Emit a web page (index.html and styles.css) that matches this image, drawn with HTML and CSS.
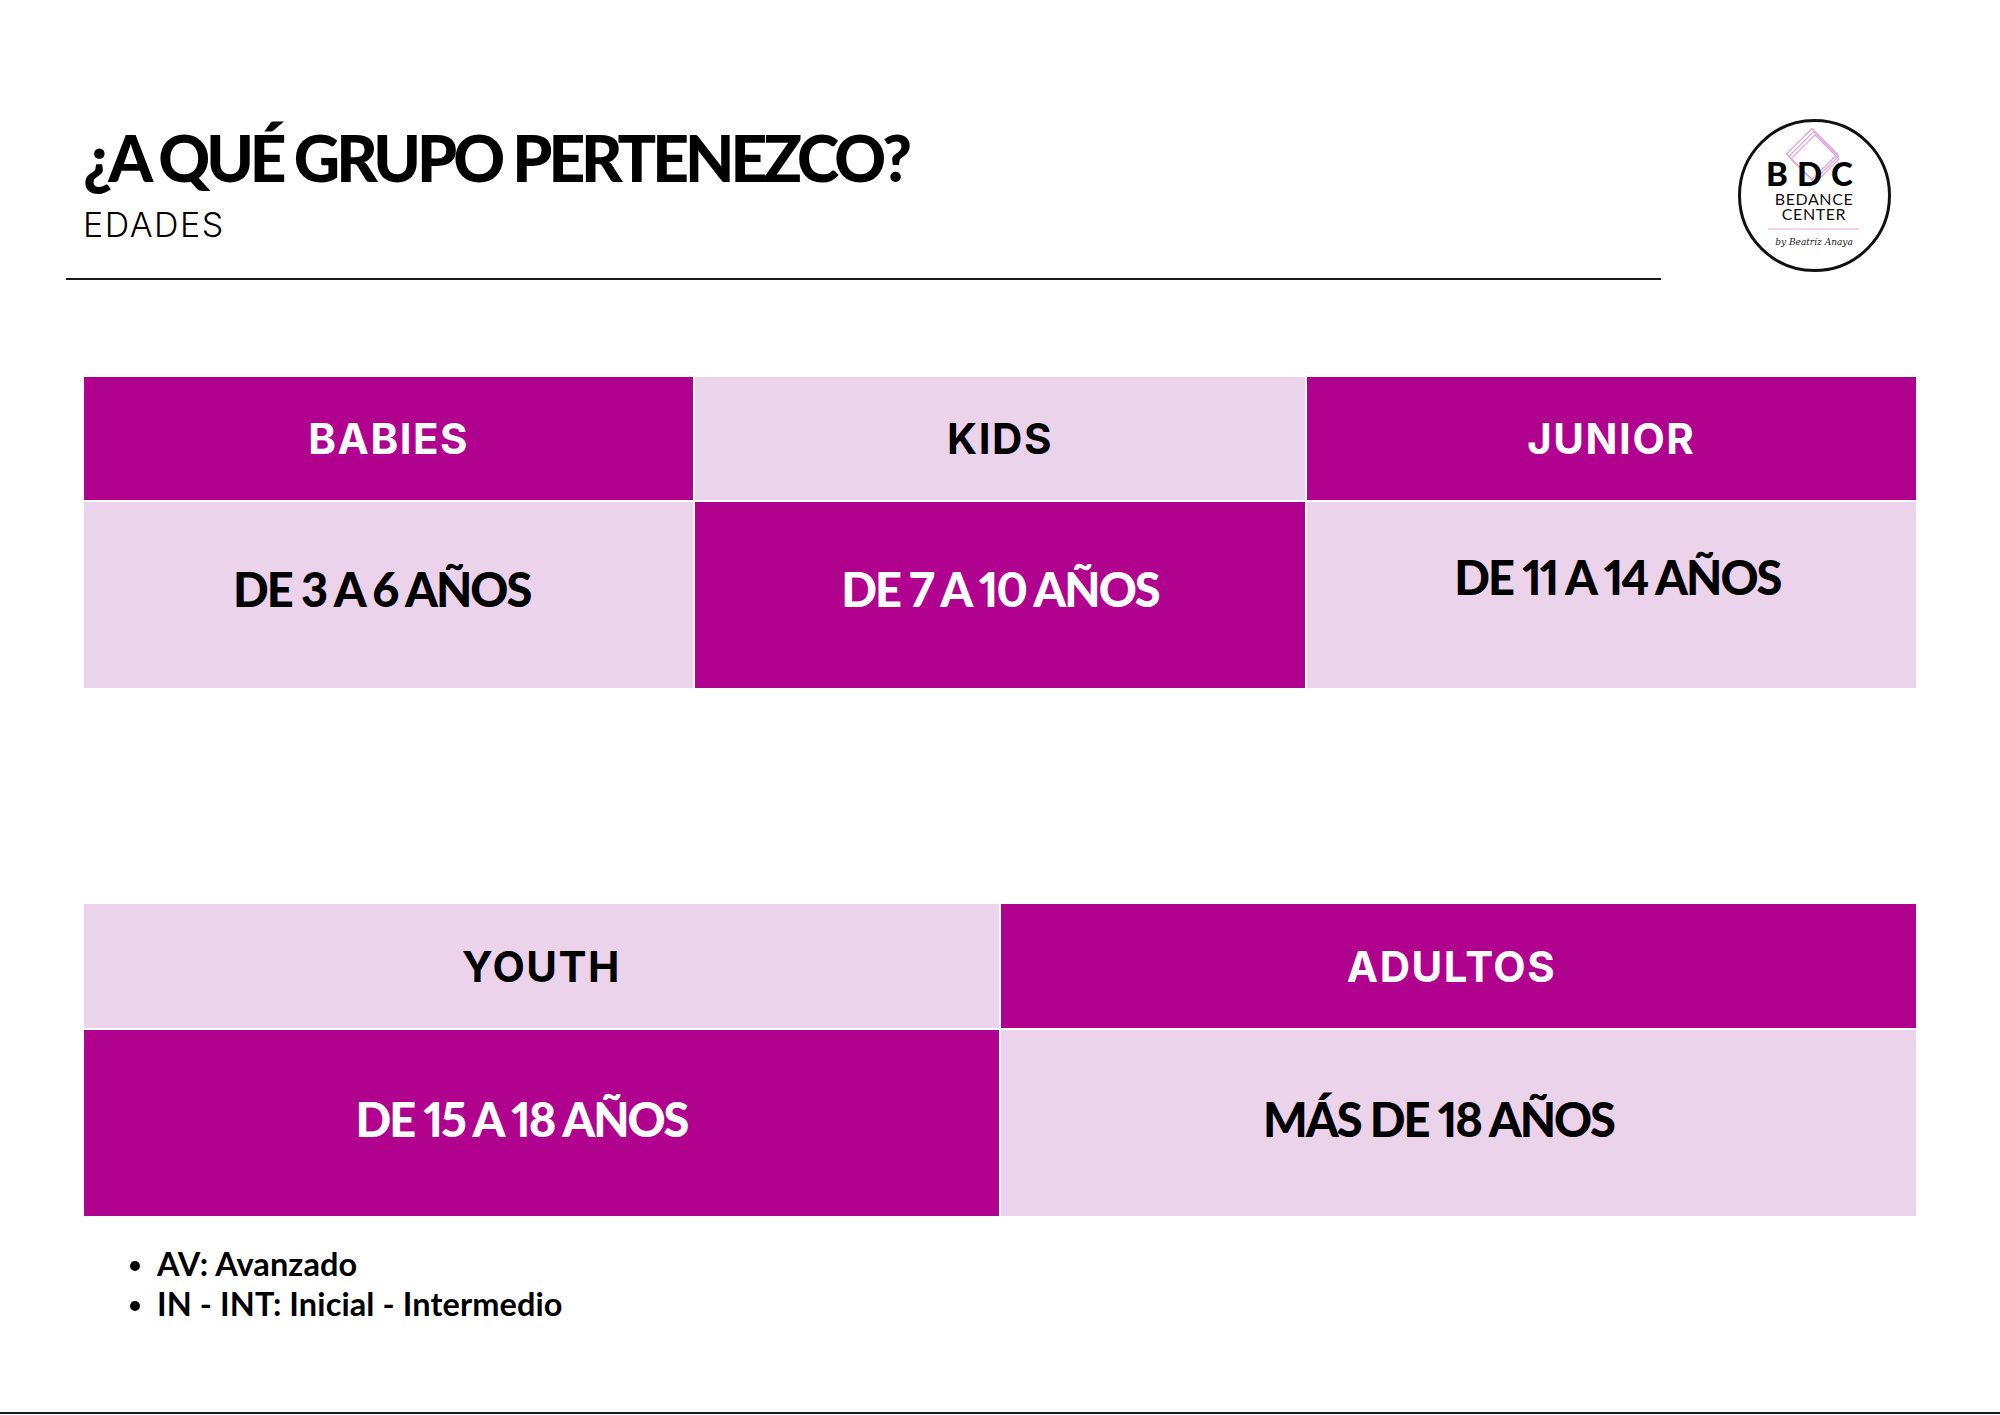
FILE: index.html
```html
<!DOCTYPE html>
<html lang="es">
<head>
<meta charset="utf-8">
<title>¿A qué grupo pertenezco?</title>
<link rel="stylesheet" href="styles.css">
</head>
<body>
<div class="page">
  <header class="top">
    <div class="heading">
      <h1 class="title">¿A QUÉ GRUPO PERTENEZCO?</h1>
      <p class="sub">EDADES</p>
    </div>
    <svg class="logo" width="155" height="155" viewBox="0 0 155 155" aria-label="BDC Bedance Center">
      <circle cx="77.5" cy="77.5" r="75" fill="#fff" stroke="#111" stroke-width="3"/>
      <g fill="none" stroke="#e3a3dc" stroke-width="1.2">
        <rect x="57" y="18" width="36" height="36" transform="rotate(45 75 36)"/>
        <rect x="59" y="21" width="35" height="35" transform="rotate(45 76.5 38.5)"/>
        <rect x="61" y="24" width="34" height="34" transform="rotate(45 78 41)"/>
      </g>
      <text x="77" y="68" class="logo-bdc" text-anchor="middle">BDC</text>
      <text x="77" y="87" class="logo-sm" text-anchor="middle">BEDANCE</text>
      <text x="77" y="102" class="logo-sm" text-anchor="middle">CENTER</text>
      <line x1="31" y1="111" x2="122" y2="111" stroke="#e3a3dc" stroke-width="1.2"/>
      <text x="77" y="127" class="logo-script" text-anchor="middle">by Beatriz Anaya</text>
    </svg>
  </header>

  <section class="grid grid-3">
    <div class="cell head dark">BABIES</div>
    <div class="cell head light">KIDS</div>
    <div class="cell head dark">JUNIOR</div>
    <div class="cell body light shift-l">DE 3 A 6 AÑOS</div>
    <div class="cell body dark">DE 7 A 10 AÑOS</div>
    <div class="cell body light raise shift-r">DE 11 A 14 AÑOS</div>
  </section>

  <section class="grid grid-2">
    <div class="cell head light">YOUTH</div>
    <div class="cell head dark shift-l">ADULTOS</div>
    <div class="cell body dark shift-ll">DE 15 A 18 AÑOS</div>
    <div class="cell body light shift-ll">MÁS DE 18 AÑOS</div>
  </section>

  <ul class="notes">
    <li>AV: Avanzado</li>
    <li>IN - INT: Inicial - Intermedio</li>
  </ul>

  <div class="bottom-line"></div>
</div>
</body>
</html>
```

FILE: styles.css
```css
* { box-sizing: border-box; }

html, body {
  margin: 0;
  padding: 0;
  background: #fff;
}

.page {
  width: 2000px;
  height: 1415px;
  display: flex;
  flex-direction: column;
  font-family: "Lato", "Liberation Sans", sans-serif;
  color: #000;
}

.top {
  display: flex;
  justify-content: space-between;
  align-items: flex-start;
  padding: 0 108px 0 66px;
}

.heading {
  width: 1595px;
  padding: 125px 0 37px 17px;
  border-bottom: 2px solid #1a1a1a;
}

.title {
  margin: 0;
  font-family: "Lato", sans-serif;
  font-weight: 900;
  font-size: 64px;
  line-height: 66px;
  letter-spacing: -4px;
}

.sub {
  margin: 18px 0 0;
  font-family: "Inter", sans-serif;
  font-weight: 300;
  font-size: 34px;
  line-height: 32px;
  letter-spacing: 1.5px;
}

.logo {
  margin-top: 118px;
  display: block;
}

.logo-bdc {
  font-family: "Lato", sans-serif;
  font-weight: 900;
  font-size: 33px;
  letter-spacing: 9px;
  fill: #000;
}

.logo-sm {
  font-family: "Lato", sans-serif;
  font-weight: 400;
  font-size: 16px;
  letter-spacing: 0.6px;
  fill: #111;
}

.logo-script {
  font-family: "DejaVu Serif", serif;
  font-style: italic;
  font-size: 9px;
  fill: #222;
}

.grid {
  display: grid;
  gap: 2px;
  margin-left: 84px;
  width: 1832px;
}

.grid-3 {
  margin-top: 97px;
  grid-template-columns: repeat(3, 1fr);
  grid-template-rows: 123px 186px;
}

.grid-2 {
  margin-top: 216px;
  grid-template-columns: repeat(2, 1fr);
  grid-template-rows: 124px 186px;
}

.cell {
  display: flex;
  align-items: center;
  justify-content: center;
}

.dark { background: #b1018f; color: #fff; }
.light { background: #ecd3ec; color: #000; }

.head {
  font-family: "Inter", sans-serif;
  font-weight: 700;
  font-size: 42px;
  letter-spacing: 1.5px;
}

.body {
  font-family: "Lato", sans-serif;
  font-weight: 900;
  font-size: 47px;
  letter-spacing: -2px;
  font-variant-numeric: proportional-nums;
  padding-bottom: 12px;
}

.raise { padding-bottom: 36px; }
.shift-l { padding-right: 14px; }
.shift-r { padding-left: 12px; }
.shift-ll { padding-right: 40px; }
.body.shift-ll { padding-bottom: 8px; }

.notes {
  margin: 28px 0 0;
  padding: 0 0 0 157px;
  font-family: "Lato", sans-serif;
  font-weight: 700;
  font-size: 32.5px;
  line-height: 40px;
  letter-spacing: 0.1px;
}

.notes li::marker {
  font-size: 30px;
}

.bottom-line {
  margin-top: auto;
  margin-bottom: 1px;
  height: 2px;
  background: #1a1a1a;
}
```
